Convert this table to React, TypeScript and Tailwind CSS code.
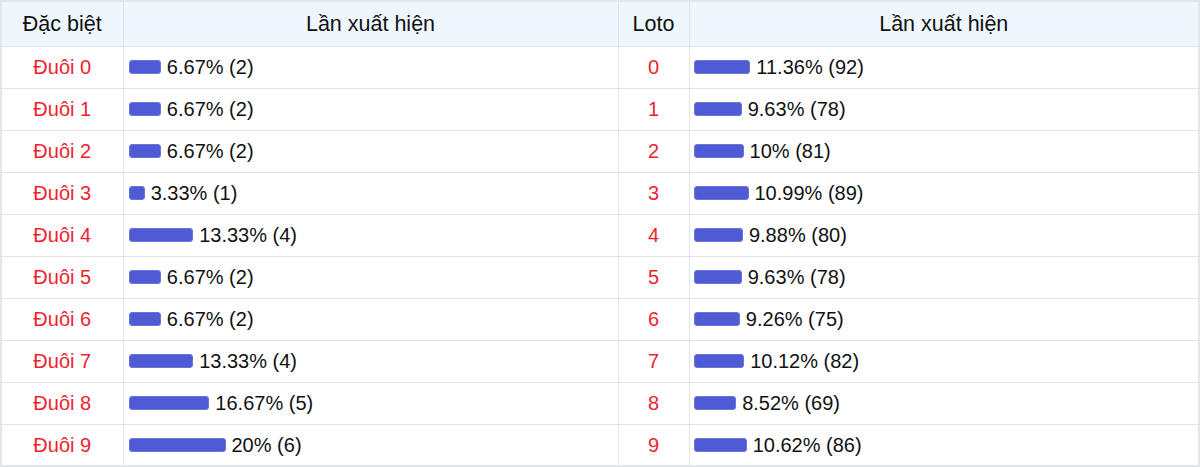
const special = [
  { label: "Đuôi 0", pct: 6.67, count: 2 },
  { label: "Đuôi 1", pct: 6.67, count: 2 },
  { label: "Đuôi 2", pct: 6.67, count: 2 },
  { label: "Đuôi 3", pct: 3.33, count: 1 },
  { label: "Đuôi 4", pct: 13.33, count: 4 },
  { label: "Đuôi 5", pct: 6.67, count: 2 },
  { label: "Đuôi 6", pct: 6.67, count: 2 },
  { label: "Đuôi 7", pct: 13.33, count: 4 },
  { label: "Đuôi 8", pct: 16.67, count: 5 },
  { label: "Đuôi 9", pct: 20, count: 6 },
];

const loto = [
  { label: "0", pct: 11.36, count: 92 },
  { label: "1", pct: 9.63, count: 78 },
  { label: "2", pct: 10, count: 81 },
  { label: "3", pct: 10.99, count: 89 },
  { label: "4", pct: 9.88, count: 80 },
  { label: "5", pct: 9.63, count: 78 },
  { label: "6", pct: 9.26, count: 75 },
  { label: "7", pct: 10.12, count: 82 },
  { label: "8", pct: 8.52, count: 69 },
  { label: "9", pct: 10.62, count: 86 },
];

function Bar({ pct, count }: { pct: number; count: number }) {
  return (
    <div className="flex items-center w-full">
      <span
        className="h-[14px] shrink-0 rounded-[3px] bg-[#4f5bd5] border border-[#6a74dd]"
        style={{ width: `${pct}%` }}
      />
      <span className="ml-[6px] whitespace-nowrap">
        {pct}% ({count})
      </span>
    </div>
  );
}

export default function App() {
  return (
    <main className="w-[1200px] h-[467px] bg-white font-['Liberation_Sans',Arial,sans-serif] text-[20px] text-[#111]">
      <table className="w-full table-fixed border-collapse border-2 border-[#e4e6ea]">
        <colgroup>
          <col className="w-[122px]" />
          <col className="w-[495px]" />
          <col className="w-[71px]" />
          <col />
        </colgroup>
        <thead>
          <tr className="h-[45px] bg-[#eef6fe] text-[21.5px]">
            <th className="font-normal border border-[#e0e3e8]">Đặc biệt</th>
            <th className="font-normal border border-[#e0e3e8]">Lần xuất hiện</th>
            <th className="font-normal border border-[#e0e3e8]">Loto</th>
            <th className="font-normal border border-[#e0e3e8]">Lần xuất hiện</th>
          </tr>
        </thead>
        <tbody>
          {special.map((s, i) => (
            <tr key={s.label} className="h-[42px]">
              <td className="text-center text-[#f0232f] border border-[#e0e3e8]">{s.label}</td>
              <td className="pl-[5px] pr-[4px] border border-[#e0e3e8]">
                <Bar pct={s.pct} count={s.count} />
              </td>
              <td className="text-center text-[#f0232f] border border-[#e0e3e8]">{loto[i].label}</td>
              <td className="pl-[4px] pr-[4px] border border-[#e0e3e8]">
                <Bar pct={loto[i].pct} count={loto[i].count} />
              </td>
            </tr>
          ))}
        </tbody>
      </table>
    </main>
  );
}
